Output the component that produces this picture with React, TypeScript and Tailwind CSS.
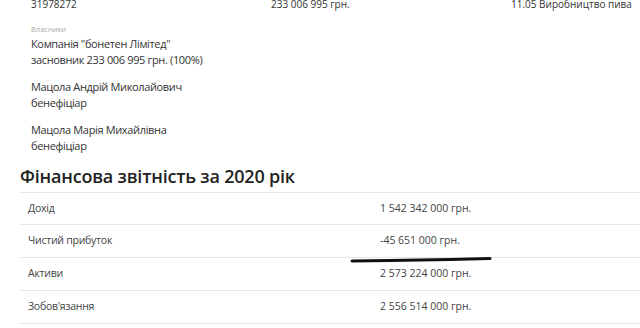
import React from "react";

const font = { fontFamily: '"Open Sans", "Noto Sans", sans-serif' };

export default function App() {
  const owners = [
    ['Компанія "бонетен Лімітед"', "засновник 233 006 995 грн. (100%)"],
    ["Мацола Андрій Миколайович", "бенефіціар"],
    ["Мацола Марія Михайлівна", "бенефіціар"],
  ];
  const rows = [
    ["Дохід", "1 542 342 000 грн.", "h-[32px]"],
    ["Чистий прибуток", "-45 651 000 грн.", "h-[33px]"],
    ["Активи", "2 573 224 000 грн.", "h-[33px]"],
    ["Зобов'язання", "2 556 514 000 грн.", "h-[33px]"],
  ];
  return (
    <div className="relative w-[640px] h-[328px] overflow-hidden bg-white text-[#333]" style={font}>
      <div className="flex pl-[31px] -mt-[3px] text-[10px] leading-[14px] whitespace-nowrap">
        <div className="w-[240px]">31978272</div>
        <div className="w-[240px]">233 006 995 грн.</div>
        <div>11.05 Виробництво пива</div>
      </div>
      <div className="pl-[31px] pt-[13px]">
        <div className="text-[7.5px] leading-[10px] text-[#aaa]">Власники</div>
        <div className="flex flex-col gap-[11px] mt-[2px] text-[11px] tracking-[-0.35px] leading-[16px] whitespace-nowrap">
          {owners.map(([a, b]) => (
            <div key={a}>
              <div>{a}</div>
              <div>{b}</div>
            </div>
          ))}
        </div>
      </div>
      <div className="pl-[20px] mt-[10px]">
        <div className="text-[18px] leading-[24px] font-semibold tracking-[-0.2px] text-[#222] whitespace-nowrap">Фінансова звітність за 2020 рік</div>
        <div className="mt-[4px] border-t border-[#e6e6e6]">
          {rows.map(([a, b, h]) => (
            <div key={a} className={`flex ${h} items-center border-b border-[#e6e6e6] text-[#444]`}>
              <div className="w-[360px] pl-[8px] text-[10.5px] tracking-[-0.25px]">{a}</div>
              <div className="text-[10.5px]">{b}</div>
            </div>
          ))}
        </div>
      </div>
      <svg className="absolute left-[350px] top-[254px]" width="142" height="10" viewBox="0 0 142 10">
        <path d="M2 7 L40 6.6 L70 6 L100 5.6 L140 4.5" stroke="#111" strokeWidth="3" fill="none" strokeLinecap="round" />
      </svg>
    </div>
  );
}
